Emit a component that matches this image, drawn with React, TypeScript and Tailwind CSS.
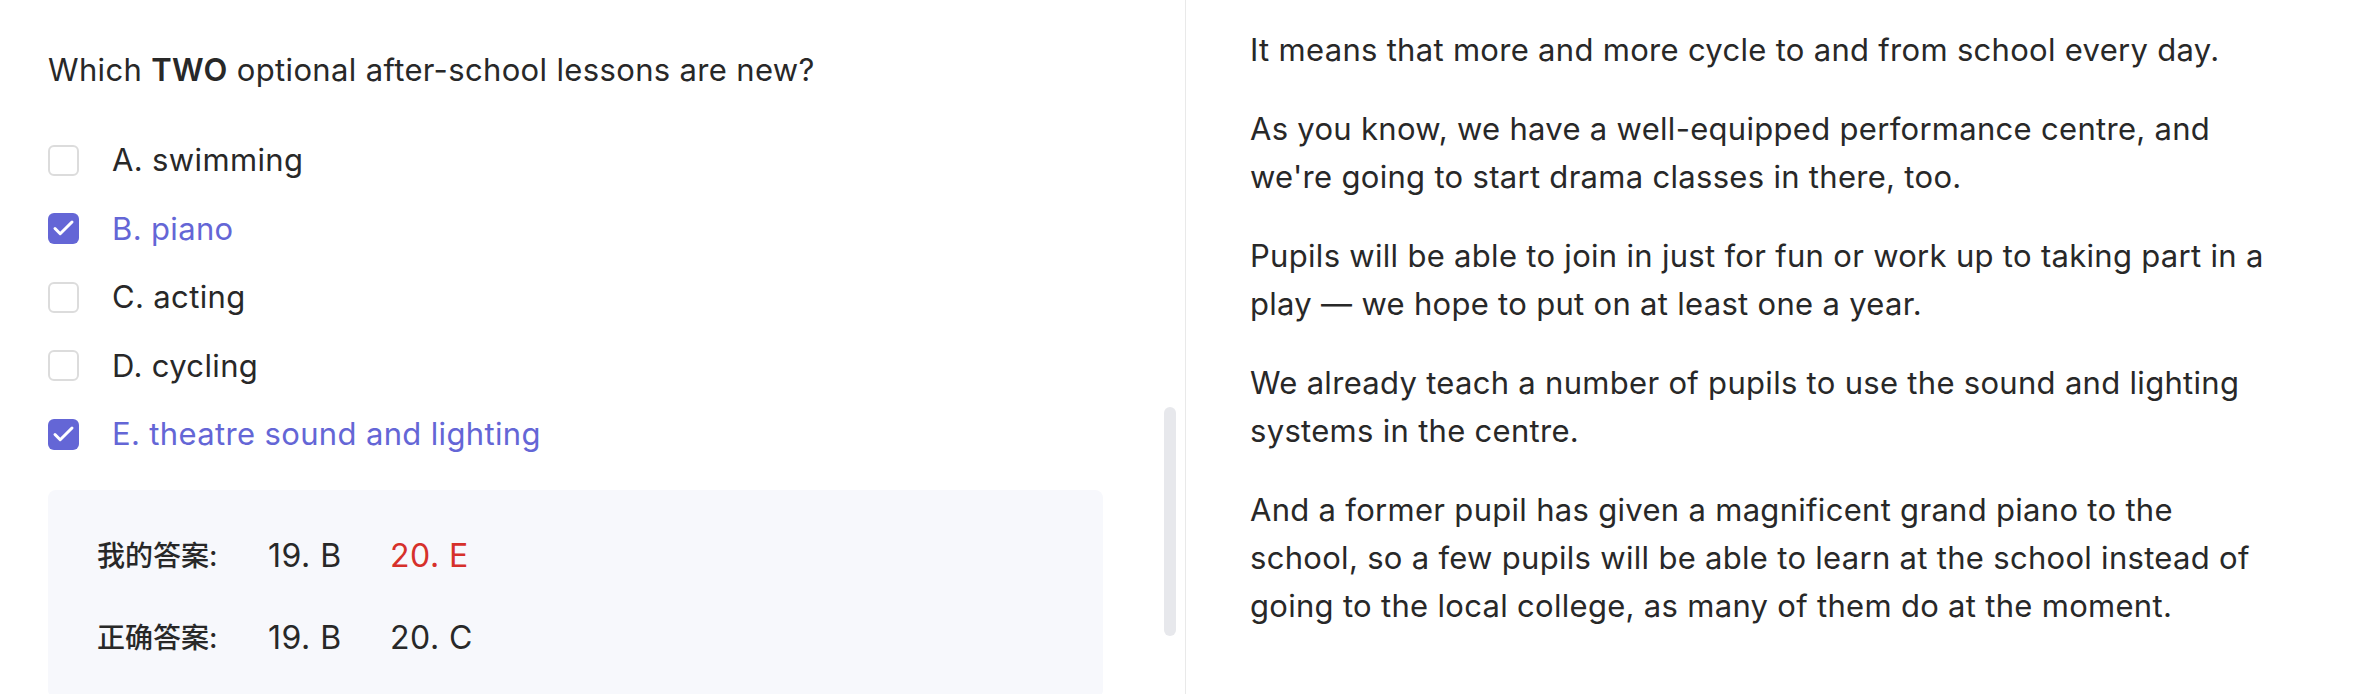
import React from 'react';

const options = [
  { key: 'A', label: 'swimming', checked: false },
  { key: 'B', label: 'piano', checked: true },
  { key: 'C', label: 'acting', checked: false },
  { key: 'D', label: 'cycling', checked: false },
  { key: 'E', label: 'theatre sound and lighting', checked: true },
];

const Checkbox = ({ checked }: { checked: boolean }) =>
  checked ? (
    <span className="block h-[31px] w-[31px] shrink-0 rounded-[6px] bg-[#6466d6]">
      <svg width="31" height="31" viewBox="0 0 31 31" fill="none">
        <path d="M7 15.5l5.2 5.2L24 9" stroke="white" strokeWidth="3" strokeLinecap="round" strokeLinejoin="round" />
      </svg>
    </span>
  ) : (
    <span className="h-[31px] w-[31px] shrink-0 rounded-[6px] border-2 border-[#dcdcdc] bg-white" />
  );

export default function App() {
  return (
    <div
      className="flex h-[694px] w-[2354px] overflow-hidden bg-white text-[#282828]"
      style={{ fontFamily: 'Inter, "Noto Sans CJK SC", sans-serif' }}
    >
      {/* left: question */}
      <div className="relative w-[1185px] shrink-0 pl-[48px] pr-[82px] pt-[50px]">
        <p className="text-[31px] leading-[40px] tracking-[0.35px]">
          Which <b className="font-semibold">TWO</b> optional after-school lessons are new?
        </p>

        <div className="mt-[36px] flex flex-col">
          {options.map((o) => (
            <div key={o.key} className="flex h-[68.5px] items-center gap-[33px]">
              <Checkbox checked={o.checked} />
              <span className={`text-[31px] tracking-[0.35px] ${o.checked ? 'text-[#6466d6]' : ''}`}>
                {o.key}. {o.label}
              </span>
            </div>
          ))}
        </div>

        <div className="mt-[21px] rounded-[8px] bg-[#f7f8fc] pl-[49px] pt-[46px] pb-[40px]">
          <div className="flex h-[40px] items-center">
            <span className="w-[171px] text-[28px] font-medium">我的答案:</span>
            <span className="w-[122px] text-[32px] tracking-[0.5px]">19. B</span>
            <span className="text-[32px] tracking-[0.5px] text-[#d6302b]">20. E</span>
          </div>
          <div className="mt-[42px] flex h-[40px] items-center">
            <span className="w-[171px] text-[28px] font-medium">正确答案:</span>
            <span className="w-[122px] text-[32px] tracking-[0.5px]">19. B</span>
            <span className="text-[32px] tracking-[0.5px]">20. C</span>
          </div>
        </div>

        {/* overlay scrollbar */}
        <div className="absolute left-[1164px] top-[407px] h-[229px] w-[12px] rounded-full bg-[#e7e8ec]" />
      </div>

      <div className="w-px shrink-0 bg-[#e9e9e9]" />

      {/* right: transcript */}
      <div className="flex-1 pl-[64px] pr-[40px] pt-[26px] text-[31px] leading-[48px] tracking-[0.3px]">
        <p className="mb-[31px]">It means that more and more cycle to and from school every day.</p>
        <p className="mb-[31px]">
          As you know, we have a well-equipped performance centre, and
          <br />
          we're going to start drama classes in there, too.
        </p>
        <p className="mb-[31px]">
          Pupils will be able to join in just for fun or work up to taking part in a
          <br />
          play — we hope to put on at least one a year.
        </p>
        <p className="mb-[31px]">
          We already teach a number of pupils to use the sound and lighting
          <br />
          systems in the centre.
        </p>
        <p>
          And a former pupil has given a magnificent grand piano to the
          <br />
          school, so a few pupils will be able to learn at the school instead of
          <br />
          going to the local college, as many of them do at the moment.
        </p>
      </div>
    </div>
  );
}
